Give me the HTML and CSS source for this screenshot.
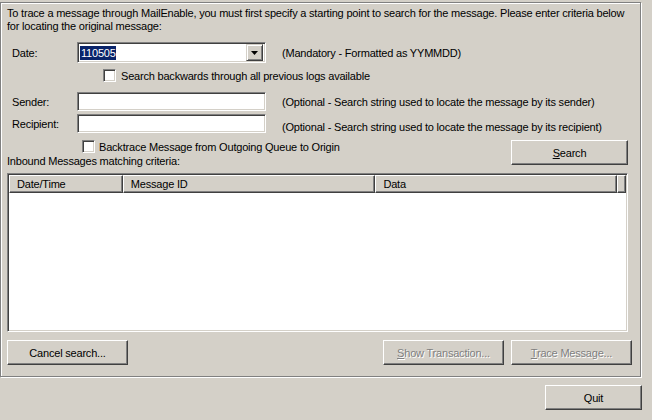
FILE: index.html
```html
<!DOCTYPE html>
<html lang="en">
  <head>
    <meta charset="UTF-8" />
    <title>Message Trace</title>
    <link rel="stylesheet" href="styles.css">
  </head>
  <body>
    <div class="panel">
      <p class="intro">
        To trace a message through MailEnable, you must first specify a starting point to search for the message. Please enter criteria below<br>
        for locating the original message:
      </p>

      <div class="row row-date">
        <span class="field-label">Date:</span>
        <div class="combo">
          <span class="combo-text"><span class="selected">110505</span></span>
          <span class="combo-btn">
            <svg width="7" height="4" viewBox="0 0 7 4"><path d="M0 0h7L3.5 4z" fill="#000"/></svg>
          </span>
        </div>
        <span class="hint">(Mandatory - Formatted as YYMMDD)</span>
      </div>

      <div class="check-row check-back">
        <span class="checkbox"></span>
        <span>Search backwards through all previous logs available</span>
      </div>

      <div class="row row-sender">
        <span class="field-label">Sender:</span>
        <div class="textbox"></div>
        <span class="hint">(Optional - Search string used to locate the message by its sender)</span>
      </div>

      <div class="row row-recipient">
        <span class="field-label">Recipient:</span>
        <div class="textbox"></div>
        <span class="hint hint-low">(Optional - Search string used to locate the message by its recipient)</span>
      </div>

      <div class="search-area">
        <div class="search-left">
          <div class="check-row check-trace">
            <span class="checkbox"></span>
            <span>Backtrace Message from Outgoing Queue to Origin</span>
          </div>
          <div class="list-caption">Inbound Messages matching criteria:</div>
        </div>
        <button class="btn btn-search"><u>S</u>earch</button>
      </div>

      <div class="listview">
        <div class="list-head">
          <div class="col col-date">Date/Time</div>
          <div class="col col-id">Message ID</div>
          <div class="col col-data">Data</div>
          <div class="col col-fill"></div>
        </div>
        <div class="list-body"></div>
      </div>

      <div class="actions">
        <button class="btn btn-wide">Cancel search...</button>
        <div class="actions-right">
          <button class="btn btn-wide" disabled><u>S</u>how Transaction...</button>
          <button class="btn btn-wide" disabled><u>T</u>race Message...</button>
        </div>
      </div>
    </div>

    <div class="footer">
      <button class="btn btn-quit">Quit</button>
    </div>
  </body>
</html>
```

FILE: styles.css
```css
* {
  box-sizing: border-box;
}

body {
  margin: 0;
  width: 652px;
  height: 420px;
  background-color: #d4d0c8;
  font-family: "Liberation Sans", Arial, sans-serif;
  font-size: 11px;
  letter-spacing: -0.2px;
  color: #000;
  overflow: hidden;
}

.panel {
  margin-top: 2px;
  width: 641px;
  border: 1px solid #808080;
  box-shadow: inset 1px 1px 0 #fff, 1px 1px 0 #fff;
  padding: 3px 8px 11px 6px;
}

.intro {
  margin: 0;
  padding-top: 1px;
  line-height: 13px;
  white-space: nowrap;
}

.row {
  display: flex;
  align-items: center;
  padding-left: 5px;
}

.row-date {
  margin-top: 9px;
  height: 21px;
}

.row-sender {
  margin-top: 10px;
  height: 19px;
}

.row-recipient {
  margin-top: 3px;
  height: 19px;
}

.field-label {
  width: 65px;
}

.hint {
  margin-left: 16px;
  white-space: nowrap;
}

.hint-low {
  margin-top: 6px;
}

/* sunken edit controls */
.combo,
.textbox {
  width: 189px;
  background-color: #fff;
  border: 1px solid;
  border-color: #808080 #fff #fff #808080;
  box-shadow: inset 1px 1px 0 #404040, inset -1px -1px 0 #d4d0c8;
}

.combo {
  height: 21px;
  display: flex;
  align-items: center;
  padding: 2px;
}

.textbox {
  height: 19px;
}

.combo-text {
  flex: 1;
}

.selected {
  background-color: #0a246a;
  color: #fff;
  padding: 1px 0 1px 1px;
}

.combo-btn {
  width: 17px;
  height: 17px;
  display: flex;
  align-items: center;
  justify-content: center;
  background-color: #d4d0c8;
  border: 1px solid;
  border-color: #d4d0c8 #404040 #404040 #d4d0c8;
  box-shadow: inset 1px 1px 0 #fff, inset -1px -1px 0 #808080;
}

.check-row {
  display: flex;
  align-items: center;
  height: 13px;
  white-space: nowrap;
}

.check-back {
  margin-top: 6px;
  padding-left: 96px;
}

.check-trace {
  padding-left: 75px;
}

.checkbox {
  width: 13px;
  height: 13px;
  margin-right: 5px;
  background-color: #fff;
  border: 1px solid;
  border-color: #808080 #fff #fff #808080;
  box-shadow: inset 1px 1px 0 #404040, inset -1px -1px 0 #d4d0c8;
}

.check-trace .checkbox {
  margin-right: 4px;
}

.search-area {
  margin-top: 7px;
  display: flex;
  justify-content: space-between;
  align-items: flex-start;
  height: 28px;
}

.list-caption {
  margin-top: 2px;
  line-height: 13px;
}

.btn {
  font-family: "Liberation Sans", Arial, sans-serif;
  font-size: 11px;
  letter-spacing: -0.2px;
  color: #000;
  height: 25px;
  padding: 0;
  background-color: #d4d0c8;
  border: 1px solid;
  border-color: #fff #404040 #404040 #fff;
  box-shadow: inset -1px -1px 0 #808080;
}

.btn:disabled {
  color: #808080;
  text-shadow: 1px 1px 0 #fff;
}

.btn-search {
  width: 117px;
  margin-right: 4px;
}

.btn-wide {
  width: 121px;
}

.listview {
  margin-top: 5px;
  margin-right: 4px;
  height: 159px;
  background-color: #fff;
  border: 1px solid;
  border-color: #808080 #fff #fff #808080;
  box-shadow: inset 1px 1px 0 #404040, inset -1px -1px 0 #d4d0c8;
  padding: 1px;
}

.list-head {
  display: flex;
  height: 18px;
}

.col {
  height: 18px;
  line-height: 16px;
  padding-left: 7px;
  background-color: #d4d0c8;
  border: 1px solid;
  border-color: #fff #404040 #404040 #fff;
  box-shadow: inset -1px -1px 0 #808080;
  white-space: nowrap;
}

.col-date {
  width: 114px;
}

.col-id {
  width: 253px;
}

.col-data {
  width: 242px;
}

.col-fill {
  flex: 1;
}

.actions {
  margin-top: 8px;
  display: flex;
  justify-content: space-between;
}

.actions-right {
  display: flex;
  gap: 7px;
}

.footer {
  width: 642px;
  margin-top: 8px;
  display: flex;
  justify-content: flex-end;
}

.btn-quit {
  width: 97px;
}
```
